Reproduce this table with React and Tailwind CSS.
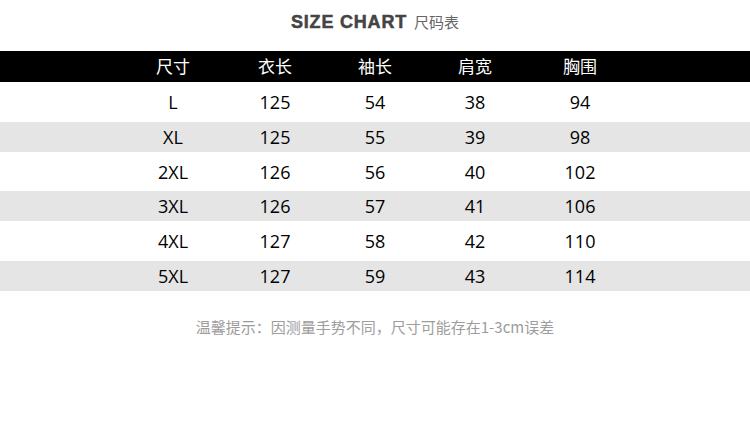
import React from "react";

const rows = [
  ["L", "125", "54", "38", "94"],
  ["XL", "125", "55", "39", "98"],
  ["2XL", "126", "56", "40", "102"],
  ["3XL", "126", "57", "41", "106"],
  ["4XL", "127", "58", "42", "110"],
  ["5XL", "127", "59", "43", "114"],
];
const heads = ["尺寸", "衣长", "袖长", "肩宽", "胸围"];
const widths = ["w-[100px]", "w-[104px]", "w-[96px]", "w-[104px]", "w-[106px]"];
const rowStyles = [
  "h-[40px] bg-white",
  "h-[30px] bg-[#e5e5e5]",
  "h-[39px] bg-white",
  "h-[30px] bg-[#e5e5e5]",
  "h-[40px] bg-white",
  "h-[30px] bg-[#e5e5e5]",
];

function Row({ cells, className, textClass }) {
  return (
    <div className={`flex items-center pl-[123px] ${className}`}>
      {cells.map((c, i) => (
        <div key={i} className={`${widths[i]} text-center ${textClass}`}>
          {c}
        </div>
      ))}
    </div>
  );
}

export default function App() {
  return (
    <div
      className="w-[750px] h-[437px] bg-white overflow-hidden"
      style={{ fontFamily: '"Open Sans", "Noto Sans CJK SC", sans-serif' }}
    >
      <div className="h-[51px] flex justify-center items-start pt-[11px]">
        <div className="flex items-baseline gap-[7px]">
          <span
            className="text-[18px] font-bold text-[#444] tracking-[0.8px] leading-[22px] [-webkit-text-stroke:0.5px_#444]"
            style={{ fontFamily: '"Liberation Sans", Arial, sans-serif' }}
          >
            SIZE CHART
          </span>
          <span
            className="text-[15px] text-[#666] leading-[22px]"
            style={{ fontFamily: '"Noto Sans CJK SC", sans-serif' }}
          >
            尺码表
          </span>
        </div>
      </div>
      <Row
        cells={heads}
        className="h-[31px] bg-black"
        textClass="text-white text-[17px] leading-[24px]"
      />
      {rows.map((r, i) => (
        <Row
          key={i}
          cells={r}
          className={rowStyles[i]}
          textClass="text-black text-[18px] leading-[24px]"
        />
      ))}
      <div className="flex justify-center pt-[25px]">
        <span
          className="text-[15px] text-[#9d9d9d] leading-[22px]"
          style={{ fontFamily: '"Noto Sans CJK SC", sans-serif' }}
        >
          温馨提示：因测量手势不同，尺寸可能存在1-3cm误差
        </span>
      </div>
    </div>
  );
}
